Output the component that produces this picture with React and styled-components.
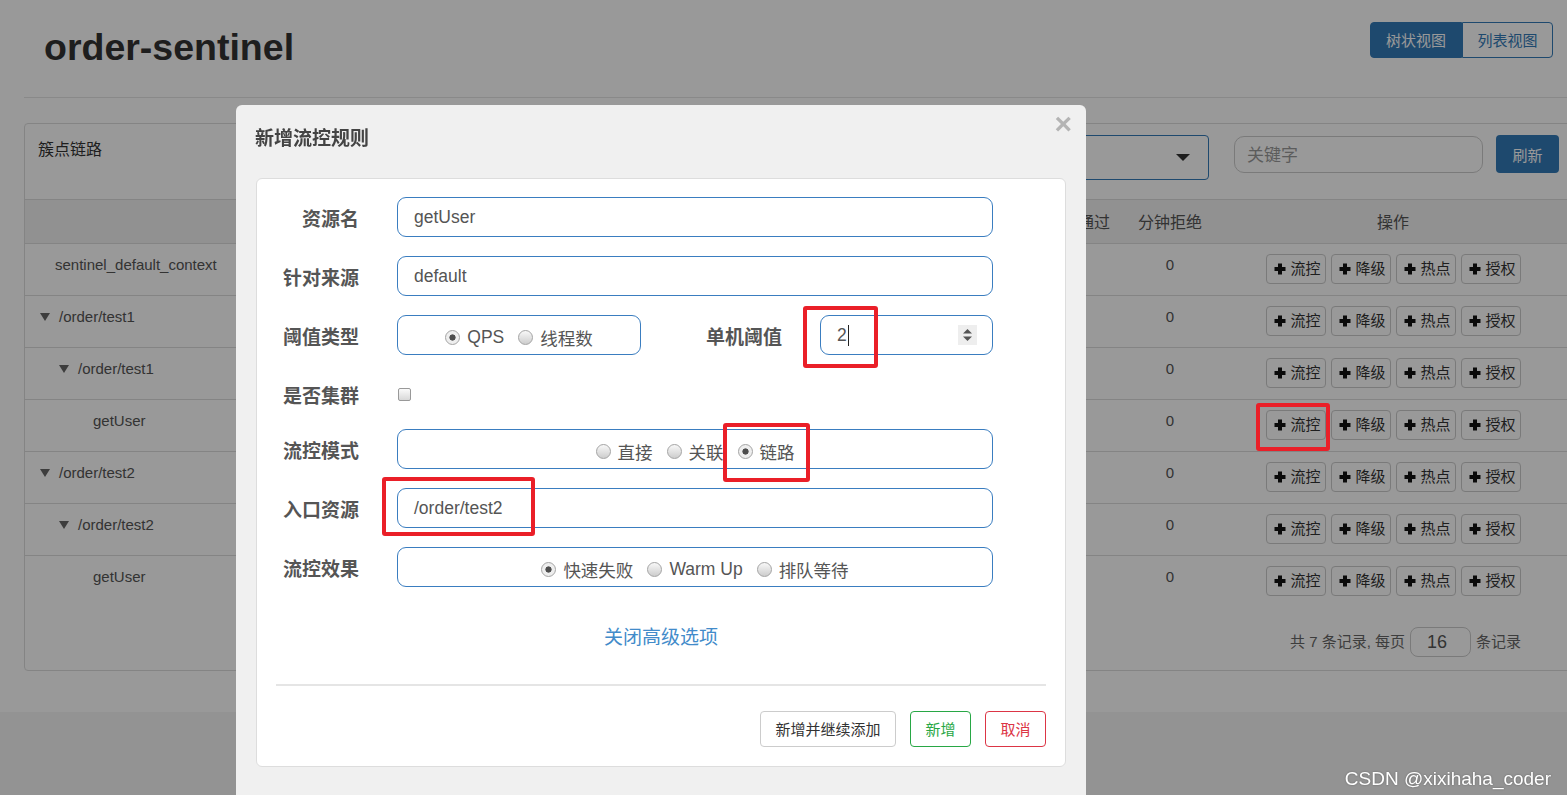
import React from 'react'
import styled, { createGlobalStyle } from 'styled-components'

const FONT = `"Liberation Sans", Arial, "Noto Sans CJK SC", sans-serif`

const GlobalStyle = createGlobalStyle`
  html, body { margin: 0; padding: 0; }
  body {
    background: #f5f5f5;
    font-family: ${FONT};
    color: #333;
    overflow: hidden;
    width: 1567px;
    height: 795px;
  }
  * { box-sizing: border-box; }
`

const COLS = '635px repeat(4, 93px) 92px 92px 354px 1fr'

// only the columns right of the dialog show their headers / values
const headers = ['', '', '', '', '', '分钟通过', '分钟拒绝', '操作']

const rows = [
  { name: 'sentinel_default_context', level: 1, leaf: true },
  { name: '/order/test1', level: 1 },
  { name: '/order/test1', level: 2 },
  { name: 'getUser', level: 3, leaf: true },
  { name: '/order/test2', level: 1 },
  { name: '/order/test2', level: 2 },
  { name: 'getUser', level: 3, leaf: true },
]

const actions = ['流控', '降级', '热点', '授权']

function Plus() {
  return (
    <svg width="12" height="12" viewBox="0 0 12 12">
      <path d="M4 0.5h4v3.5h3.5v4H8v3.5H4V8H0.5V4H4z" fill="#111" />
    </svg>
  )
}

function Radio({ checked, children }) {
  return (
    <RadioItem>
      <RadioDot $checked={checked} />
      <span>{children}</span>
    </RadioItem>
  )
}

export default function App() {
  return (
    <>
      <GlobalStyle />
      <Page>
        <TopBar>
          <Title>order-sentinel</Title>
          <Toggle>
            <ToggleBtn $active>树状视图</ToggleBtn>
            <ToggleBtn>列表视图</ToggleBtn>
          </Toggle>
        </TopBar>
        <Panel>
          <PanelHead>
            <PanelTitle>簇点链路</PanelTitle>
            <Toolbar>
              <Select>
                <Caret />
              </Select>
              <Keyword>关键字</Keyword>
              <Refresh>刷新</Refresh>
            </Toolbar>
          </PanelHead>
          <HeadRow>
            {headers.map((h, i) => (
              <span key={i}>{h}</span>
            ))}
            <span />
          </HeadRow>
          {rows.map((r, i) => (
            <Row key={i}>
              <TreeCell $level={r.level}>
                {r.leaf ? <LeafGap /> : <TreeCaret />}
                {r.name}
              </TreeCell>
              <Num />
              <Num />
              <Num />
              <Num />
              <Num />
              <Num>0</Num>
              <Actions>
                {actions.map((a) => (
                  <ActBtn key={a}>
                    <Plus />
                    {a}
                  </ActBtn>
                ))}
              </Actions>
              <span />
            </Row>
          ))}
          <Pager>
            共 7 条记录, 每页
            <PageSize>16</PageSize>
            条记录
          </Pager>
        </Panel>
      </Page>

      <Backdrop />

      <Modal>
        <ModalHead>
          <ModalTitle>新增流控规则</ModalTitle>
          <Close>×</Close>
        </ModalHead>
        <Card>
          <FormRow>
            <Label>资源名</Label>
            <Field>getUser</Field>
          </FormRow>
          <FormRow>
            <Label>针对来源</Label>
            <Field>default</Field>
          </FormRow>
          <FormRow $cols="102px 244px 103px 173px">
            <Label>阈值类型</Label>
            <RadioBox>
              <Radio checked>QPS</Radio>
              <Radio>线程数</Radio>
            </RadioBox>
            <Label>单机阈值</Label>
            <Field>
              2<Cursor />
              <Spinner>
                <svg width="19" height="20" viewBox="0 0 19 20">
                  <path d="M5 8.5L9.5 4 14 8.5z" fill="#555" />
                  <path d="M5 11.5L9.5 16 14 11.5z" fill="#555" />
                </svg>
              </Spinner>
            </Field>
          </FormRow>
          <FormRow $short>
            <Label>是否集群</Label>
            <Check />
          </FormRow>
          <FormRow>
            <Label>流控模式</Label>
            <RadioBox>
              <Radio>直接</Radio>
              <Radio>关联</Radio>
              <Radio checked>链路</Radio>
            </RadioBox>
          </FormRow>
          <FormRow>
            <Label>入口资源</Label>
            <Field>/order/test2</Field>
          </FormRow>
          <FormRow>
            <Label>流控效果</Label>
            <RadioBox>
              <Radio checked>快速失败</Radio>
              <Radio>Warm Up</Radio>
              <Radio>排队等待</Radio>
            </RadioBox>
          </FormRow>
          <Advanced>关闭高级选项</Advanced>
          <Rule />
          <Footer>
            <FootBtn>新增并继续添加</FootBtn>
            <FootBtn $tone="#28a745">新增</FootBtn>
            <FootBtn $tone="#dc3545">取消</FootBtn>
          </Footer>
        </Card>
      </Modal>

      <Mark $x={803} $y={306} $w={75} $h={62} />
      <Mark $x={723} $y={423} $w={87} $h={59} />
      <Mark $x={382} $y={477} $w={153} $h={59} />
      <Mark $x={1256} $y={403} $w={74} $h={48} />

      <Watermark>CSDN @xixihaha_coder</Watermark>
    </>
  )
}

const Page = styled.div`
  height: 712px;
  background: #fff;
  padding-left: 24px;
  overflow: hidden;
`

const TopBar = styled.div`
  display: flex;
  justify-content: space-between;
  align-items: flex-start;
  height: 98px;
  border-bottom: 1px solid #e5e5e5;
  padding: 0 14px 0 20px;
`

const Title = styled.h1`
  margin: 25px 0 0;
  font-size: 37.5px;
  line-height: 44px;
  font-weight: bold;
  color: #333;
`

const Toggle = styled.div`
  display: flex;
  margin-top: 22px;
`

const ToggleBtn = styled.div`
  height: 36px;
  width: ${(p) => (p.$active ? 92 : 91)}px;
  display: flex;
  align-items: center;
  justify-content: center;
  padding-bottom: 2px;
  font-size: 15px;
  border: 1px solid #337ab7;
  background: ${(p) => (p.$active ? '#337ab7' : '#fff')};
  color: ${(p) => (p.$active ? '#fff' : '#337ab7')};
  border-radius: ${(p) => (p.$active ? '4px 0 0 4px' : '0 4px 4px 0')};
`

const Panel = styled.div`
  margin-top: 25px;
  width: 1570px;
  border: 1px solid #ddd;
  border-radius: 4px;
`

const PanelHead = styled.div`
  display: flex;
  align-items: flex-start;
  height: 75px;
  padding: 0 34px 0 13px;
`

const PanelTitle = styled.div`
  margin-top: 15px;
  font-size: 16px;
  line-height: 22px;
  color: #333;
`

const Toolbar = styled.div`
  margin-left: auto;
  margin-top: 11px;
  display: flex;
  align-items: flex-start;
`

const Select = styled.div`
  width: 300px;
  height: 45px;
  border: 1px solid #337ab7;
  border-radius: 4px;
  display: flex;
  align-items: center;
  justify-content: flex-end;
  padding-right: 18px;
`

const Caret = styled.span`
  width: 0;
  height: 0;
  border-left: 7px solid transparent;
  border-right: 7px solid transparent;
  border-top: 7px solid #333;
`

const Keyword = styled.div`
  margin-left: 25px;
  margin-top: 1px;
  width: 249px;
  height: 37px;
  border: 1px solid #ccc;
  border-radius: 10px;
  padding: 0 0 2px 12px;
  display: flex;
  align-items: center;
  font-size: 17px;
  color: #999;
`

const Refresh = styled.div`
  margin-left: 13px;
  width: 63px;
  height: 38px;
  border-radius: 4px;
  background: #337ab7;
  color: #fff;
  font-size: 15px;
  display: flex;
  align-items: center;
  justify-content: center;
`

const HeadRow = styled.div`
  display: grid;
  grid-template-columns: ${COLS};
  height: 44px;
  align-items: center;
  background: #f2f2f2;
  border-top: 1px solid #ddd;
  padding-bottom: 2px;
  font-size: 16px;
  color: #555;
  text-align: center;
`

const Row = styled.div`
  display: grid;
  grid-template-columns: ${COLS};
  height: 52px;
  border-top: 1px solid #ddd;
  padding-top: 10px;
  align-items: flex-start;
  font-size: 15px;
  line-height: 22px;
  color: #555;
`

const TreeCell = styled.div`
  display: flex;
  align-items: center;
  padding-left: ${(p) => 15 + (p.$level - 1) * 19}px;
`

const TreeCaret = styled.span`
  width: 0;
  height: 0;
  margin-right: 9px;
  border-left: 5px solid transparent;
  border-right: 5px solid transparent;
  border-top: 8px solid #666;
`

const LeafGap = styled.span`
  width: 15px;
`

const Num = styled.div`
  text-align: center;
`

const Actions = styled.div`
  display: flex;
  justify-content: center;
  gap: 5px;
`

const ActBtn = styled.div`
  height: 30px;
  width: 60px;
  display: flex;
  align-items: center;
  gap: 5px;
  padding-left: 7px;
  border: 1px solid #ccc;
  border-radius: 4px;
  background: #fff;
  color: #333;
  font-size: 15px;
`

const Pager = styled.div`
  height: 63px;
  padding: 20px 72px 0 0;
  display: flex;
  justify-content: flex-end;
  align-items: flex-start;
  font-size: 15px;
  line-height: 30px;
  color: #666;
`

const PageSize = styled.div`
  margin: 0 5px;
  width: 61px;
  height: 30px;
  border: 1px solid #ccc;
  border-radius: 8px;
  padding-left: 16px;
  font-size: 18px;
  line-height: 28px;
  color: #555;
`

const Backdrop = styled.div`
  position: fixed;
  inset: 0;
  background: rgba(0, 0, 0, 0.4);
`

const Modal = styled.div`
  position: fixed;
  left: 236px;
  top: 105px;
  width: 850px;
  height: 720px;
  background: #f0f0f0;
  border-radius: 6px;
  padding: 0 20px;
`

const ModalHead = styled.div`
  position: relative;
  height: 73px;
  padding-top: 21px;
`

const ModalTitle = styled.div`
  margin-left: -1px;
  font-size: 19px;
  line-height: 26px;
  font-weight: bold;
  color: #444;
`

const Close = styled.div`
  position: absolute;
  top: 4px;
  right: -6px;
  font-size: 30px;
  line-height: 30px;
  font-weight: bold;
  color: #b4b4b4;
`

const Card = styled.div`
  height: 589px;
  background: #fff;
  border: 1px solid #ddd;
  border-radius: 6px;
  padding-top: 18px;
`

const FormRow = styled.div`
  display: grid;
  grid-template-columns: ${(p) => p.$cols || '102px 596px'};
  column-gap: 38px;
  align-items: center;
  height: 40px;
  margin-bottom: ${(p) => (p.$short ? 15 : 19)}px;
`

const Label = styled.div`
  text-align: right;
  font-size: 19px;
  font-weight: bold;
  color: #555;
`

const Field = styled.div`
  height: 40px;
  border: 1px solid #3a7dc0;
  border-radius: 9px;
  padding-left: 16px;
  display: flex;
  align-items: center;
  font-size: 17.5px;
  color: #555;
`

const Cursor = styled.span`
  width: 1px;
  height: 21px;
  margin-left: 1px;
  background: #222;
`

const Spinner = styled.span`
  margin-left: auto;
  margin-right: 15px;
  width: 19px;
  height: 20px;
  background: #eee;
  display: flex;
`

const RadioBox = styled.div`
  height: 40px;
  border: 1px solid #3a7dc0;
  border-radius: 9px;
  display: flex;
  align-items: center;
  justify-content: center;
  gap: 14px;
  padding-top: 5px;
  font-size: 17.5px;
  color: #555;
`

const RadioItem = styled.label`
  display: flex;
  align-items: center;
  gap: 7px;
`

const RadioDot = styled.span`
  width: 15px;
  height: 15px;
  border-radius: 50%;
  border: 1px solid #a4a4a4;
  background: ${(p) =>
    p.$checked
      ? 'radial-gradient(circle, #4d4d4d 0 2.8px, #eeeeee 3.4px)'
      : 'linear-gradient(#f8f8f8, #cdcdcd)'};
`

const Check = styled.span`
  margin-left: 1px;
  width: 13px;
  height: 13px;
  border: 1px solid #999;
  border-radius: 2px;
  background: linear-gradient(#fafafa, #d8d8d8);
`

const Advanced = styled.div`
  padding-top: 19px;
  text-align: center;
  font-size: 19px;
  line-height: 26px;
  color: #428bca;
`

const Rule = styled.div`
  margin: 33px 19px 0;
  height: 2px;
  background: #e5e5e5;
`

const Footer = styled.div`
  display: flex;
  justify-content: flex-end;
  gap: 14px;
  margin-top: 25px;
  padding-right: 19px;
`

const FootBtn = styled.div`
  height: 36px;
  padding: 0 14.5px 2px;
  display: flex;
  align-items: center;
  border: 1px solid ${(p) => p.$tone || '#ccc'};
  border-radius: 4px;
  background: #fff;
  font-size: 15px;
  color: ${(p) => p.$tone || '#333'};
`

const Mark = styled.div`
  position: fixed;
  left: ${(p) => p.$x}px;
  top: ${(p) => p.$y}px;
  width: ${(p) => p.$w}px;
  height: ${(p) => p.$h}px;
  border: 4px solid #ea1f28;
  border-radius: 3px;
`

const Watermark = styled.div`
  position: fixed;
  right: 16px;
  bottom: 5px;
  font-size: 19px;
  color: #fff;
  text-shadow: 0 0 2px rgba(0, 0, 0, 0.35);
`
